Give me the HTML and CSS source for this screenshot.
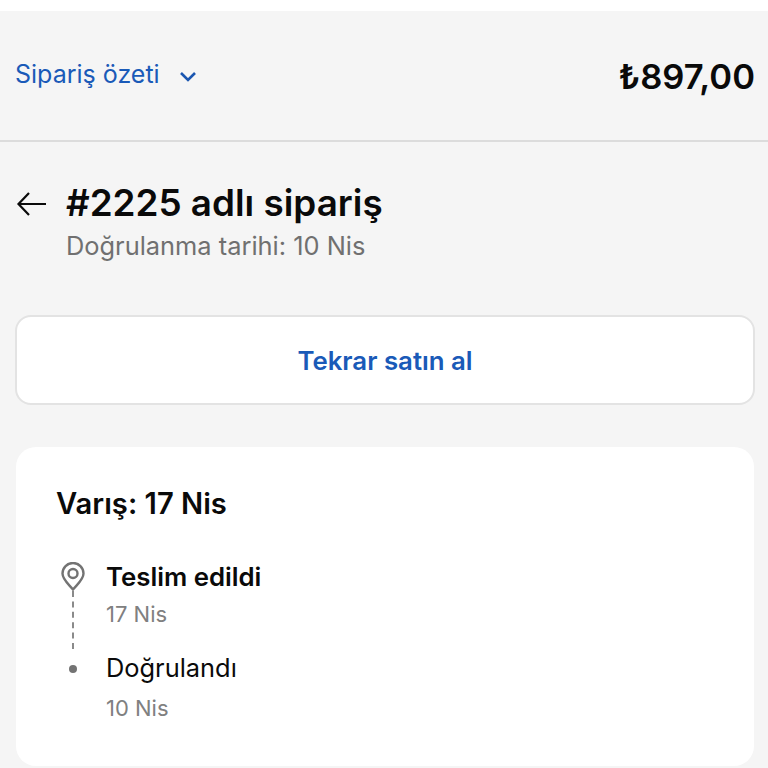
FILE: index.html
```html
<!DOCTYPE html>
<html lang="tr">
<head>
    <meta charset="UTF-8">
    <title>Sipariş</title>
    <link rel="stylesheet" href="styles.css">
</head>
<body>
    <header class="summary">
        <div class="summary-toggle">
            <span>Sipariş özeti</span>
            <svg class="chevron" width="18" height="11" viewBox="0 0 18 11"><path d="M2 2l7 7 7-7" fill="none" stroke="#1a56b0" stroke-width="2.6"/></svg>
        </div>
        <div class="summary-total">₺897,00</div>
    </header>

    <main class="content">
        <div class="order-head">
            <svg class="back" width="30" height="26" viewBox="0 0 30 26"><path d="M30 13H3M13 2L2.500 13 13 24" fill="none" stroke="#0a0a0a" stroke-width="2.200"/></svg>
            <div>
                <h1>#2225 adlı sipariş</h1>
                <p class="order-date">Doğrulanma tarihi: 10 Nis</p>
            </div>
        </div>

        <button class="buy-again">Tekrar satın al</button>

        <section class="card">
            <h2>Varış: 17 Nis</h2>
            <div class="timeline">
                <div class="step">
                    <div class="step-marker">
                        <svg width="24" height="29" viewBox="0 0 24 29"><path d="M12 27.500C7.500 22 1.500 17.500 1.500 11.500a10.500 10.500 0 0 1 21 0C22.500 17.500 16.500 22 12 27.500z" fill="none" stroke="#737373" stroke-width="2.400"/><circle cx="12" cy="11.500" r="4.500" fill="none" stroke="#737373" stroke-width="2.400"/></svg>
                        <div class="step-line"></div>
                    </div>
                    <div class="step-text">
                        <div class="step-title current">Teslim edildi</div>
                        <div class="step-date">17 Nis</div>
                    </div>
                </div>
                <div class="step">
                    <div class="step-marker">
                        <div class="step-dot"></div>
                    </div>
                    <div class="step-text">
                        <div class="step-title">Doğrulandı</div>
                        <div class="step-date step-date-last">10 Nis</div>
                    </div>
                </div>
            </div>
        </section>
    </main>
</body>
</html>
```

FILE: styles.css
```css
* {
    box-sizing: border-box;
}

body {
    margin: 0;
    height: 768px;
    overflow: hidden;
    padding-top: 11px;
    background-color: #fff;
    font-family: Inter, "Liberation Sans", sans-serif;
    color: #0a0a0a;
}

.summary {
    height: 131px;
    display: flex;
    align-items: center;
    justify-content: space-between;
    padding: 0 13px 0 15px;
    background-color: #f5f5f5;
    border-bottom: 2px solid #dcdcdc;
}

.summary-toggle {
    display: flex;
    align-items: center;
    gap: 19px;
    margin-bottom: 3px;
    font-size: 25px;
    color: #1a5ab8;
}

.chevron {
    margin-top: 5px;
}

.summary-total {
    font-size: 34.600px;
    font-weight: 600;
}

.content {
    height: 626px;
    padding: 41px 13px 0 15px;
    background-color: #f5f5f5;
}

.order-head {
    display: flex;
    gap: 20px;
}

.back {
    margin: 8px 0 0 1px;
}

h1 {
    margin: 0;
    font-size: 36.800px;
    line-height: 40px;
    font-weight: 600;
}

.order-date {
    margin: 8px 0 0;
    font-size: 25.400px;
    line-height: 30px;
    color: #707070;
}

.buy-again {
    display: block;
    width: 100%;
    height: 90px;
    margin-top: 54px;
    background-color: #fff;
    border: 2px solid #e3e3e3;
    border-radius: 16px;
    font-family: inherit;
    font-size: 25.800px;
    font-weight: 600;
    color: #1a5ab8;
}

.card {
    height: 319px;
    margin-top: 42px;
    margin-left: 1px;
    margin-right: 1px;
    padding: 40px 40px 0;
    background-color: #fff;
    border-radius: 20px;
}

h2 {
    margin: 0;
    font-size: 29.200px;
    line-height: 34px;
    font-weight: 600;
}

.timeline {
    margin-top: 41px;
}

.step {
    display: flex;
    gap: 19px;
    height: 91px;
}

.step-marker {
    width: 29px;
    margin-left: 2px;
    display: flex;
    flex-direction: column;
    align-items: center;
}

.step-dot {
    width: 8px;
    height: 8px;
    margin-top: 12px;
    border-radius: 50%;
    background-color: #737373;
}

.step-line {
    height: 58px;
    border-left: 2px dashed #8a8a8a;
}

.step-title {
    font-size: 25.400px;
    line-height: 30px;
}

.step-title.current {
    font-size: 25.800px;
    font-weight: 600;
}

.step-date {
    margin-top: 9px;
    font-size: 22px;
    line-height: 26px;
    color: #808080;
}

.step-date-last {
    margin-top: 12px;
}
```
